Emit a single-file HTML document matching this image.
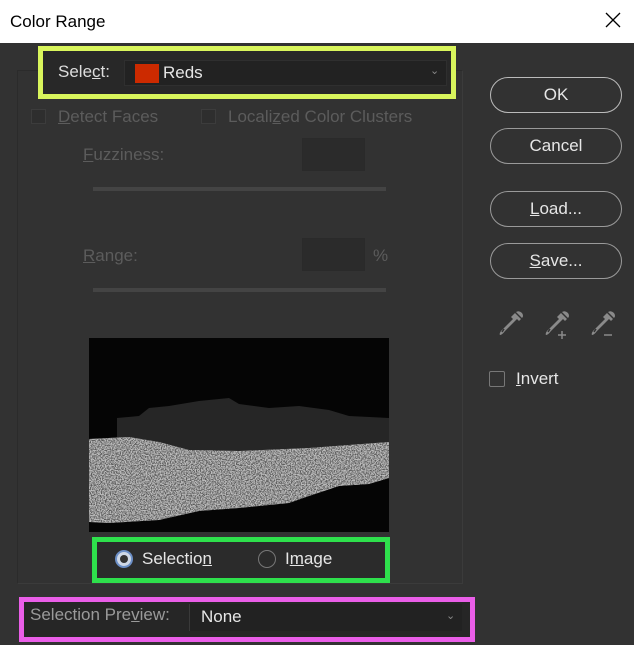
<!DOCTYPE html>
<html><head><meta charset="utf-8"><style>
*{margin:0;padding:0;box-sizing:border-box}
body{width:634px;height:645px;background:#323232;font-family:"Liberation Sans",sans-serif;position:relative;overflow:hidden;color:#ddd}
.a{position:absolute}
.title{left:0;top:0;width:634px;height:43px;background:#fff;color:#000;font-size:17px;padding:12px 0 0 10px}
.dim{color:#5c5c5c;font-size:17px}
.btn{position:absolute;left:490px;width:132px;height:36px;border:1.5px solid #9a9a9a;border-radius:18px;color:#e6e6e6;font-size:17px;text-align:center;line-height:33px}
.cb{position:absolute;width:15px;height:15px;border:1px solid #3c3c3c;background:#2e2e2e}
u{text-decoration:underline}
</style></head><body>
<div class="a title">Color Range
<svg class="a" style="left:605px;top:12px" width="16" height="16" viewBox="0 0 16 16"><path d="M1 1L15 15M15 1L1 15" stroke="#000" stroke-width="1.3"/></svg></div>
<div class="a" style="left:17px;top:70px;width:446px;height:514px;border:1px solid #2b2b2b;border-right-color:#3b3b3b;border-bottom-color:#3b3b3b"></div>
<div class="a" style="left:38px;top:46px;width:418px;height:53px;border:5px solid #d9f55c;background:#282828"></div>
<div class="a" style="left:58px;top:62px;font-size:17px;color:#ddd">Sele<u>c</u>t:</div>
<div class="a" style="left:124px;top:60px;width:323px;height:26px;background:#222;border:1px solid #2f2f2f"></div>
<div class="a" style="left:135px;top:64px;width:24px;height:19px;background:#cc2a00"></div>
<div class="a" style="left:163px;top:63px;font-size:17px;color:#e6e6e6">Reds</div>
<div class="a" style="left:430px;top:64px;font-size:11px;color:#888">⌄</div>
<div class="cb" style="left:31px;top:109px"></div>
<div class="a dim" style="left:58px;top:107px"><u>D</u>etect Faces</div>
<div class="cb" style="left:201px;top:109px"></div>
<div class="a dim" style="left:228px;top:107px">Locali<u>z</u>ed Color Clusters</div>
<div class="a dim" style="left:83px;top:145px"><u>F</u>uzziness:</div>
<div class="a" style="left:302px;top:138px;width:63px;height:33px;background:#2b2b2b;border:1px solid #2a2a2a"></div>
<div class="a" style="left:93px;top:187px;width:293px;height:4px;background:#444"></div>
<div class="a dim" style="left:83px;top:246px"><u>R</u>ange:</div>
<div class="a" style="left:302px;top:238px;width:63px;height:33px;background:#2b2b2b;border:1px solid #2a2a2a"></div>
<div class="a dim" style="left:373px;top:246px">%</div>
<div class="a" style="left:93px;top:288px;width:293px;height:4px;background:#444"></div>
<svg class="a" style="left:89px;top:338px" width="300" height="194" viewBox="0 0 300 194">
<defs><filter id="n"><feTurbulence type="fractalNoise" baseFrequency="0.8" numOctaves="2" seed="3"/><feColorMatrix values="0 0 0 0 0.1  0 0 0 0 0.1  0 0 0 0 0.1  0 0 0 4 -1.6"/><feComposite in2="SourceGraphic" operator="in"/></filter></defs>
<rect width="300" height="194" fill="#050505"/>
<path d="M28 110 L28 80 L50 78 L60 70 L80 68 L110 63 L140 60 L150 66 L180 70 L210 68 L240 72 L260 78 L300 80 L300 112 L200 118 L90 118Z" fill="#262626"/>
<path d="M0 101 L40 99 L70 104 L100 112 L150 113 L220 110 L300 104 L300 140 L280 146 L250 148 L220 158 L200 165 L150 170 L110 173 L70 182 L20 185 L0 184Z" fill="#bdbdbd"/>
<path d="M0 101 L40 99 L70 104 L100 112 L150 113 L220 110 L300 104 L300 140 L280 146 L250 148 L220 158 L200 165 L150 170 L110 173 L70 182 L20 185 L0 184Z" fill="#fff" filter="url(#n)"/>
</svg>
<div class="a" style="left:92px;top:537px;width:298px;height:46px;border:5px solid #2ee04c;background:#2b2b2b"></div>
<div class="a" style="left:115px;top:550px;width:18px;height:18px;border-radius:50%;background:#cfd8e6;border:2px solid #6c8fc7"><div class="a" style="left:3px;top:3px;width:8px;height:8px;border-radius:50%;background:#333"></div></div>
<div class="a" style="left:142px;top:549px;font-size:17px;color:#e6e6e6">Selectio<u>n</u></div>
<div class="a" style="left:258px;top:550px;width:18px;height:18px;border-radius:50%;border:1px solid #777"></div>
<div class="a" style="left:285px;top:549px;font-size:17px;color:#e6e6e6">I<u>m</u>age</div>
<div class="a" style="left:19px;top:597px;width:456px;height:45px;border:5px solid #ea5ee8;background:#262626"></div>
<div class="a" style="left:30px;top:605px;font-size:17px;color:#9a9a9a">Selection Pre<u>v</u>iew:</div>
<div class="a" style="left:189px;top:604px;width:273px;height:27px;background:#222;border-left:1px solid #3a3a3a"></div>
<div class="a" style="left:201px;top:607px;font-size:17px;color:#e6e6e6">None</div>
<div class="a" style="left:446px;top:609px;font-size:11px;color:#888">⌄</div>
<div class="btn" style="top:77px;border-color:#bbb">OK</div>
<div class="btn" style="top:128px">Cancel</div>
<div class="btn" style="top:191px"><u>L</u>oad...</div>
<div class="btn" style="top:243px"><u>S</u>ave...</div>
<svg class="a" style="left:496px;top:310px" width="130" height="30" viewBox="0 0 130 30">
<g id="d"><path d="M19 3 L25 9 L23 11 L21 9 L9 21 Q6 25 4 25 Q3 24 5 21 L17 9 L15 7Z" fill="#8a8a8a"/><path d="M20 2 Q23 0 26 3 Q28 6 26 8 Z" fill="#8a8a8a"/><path d="M8 19 L6 22" stroke="#323232" stroke-width="1.5"/></g>
<use href="#d" x="46"/><path d="M62 25 h8 M66 21 v8" stroke="#8a8a8a" stroke-width="1.5"/>
<use href="#d" x="92"/><path d="M108 25 h8" stroke="#8a8a8a" stroke-width="1.5"/>
</svg>
<div class="a" style="left:489px;top:371px;width:16px;height:16px;border:1px solid #777;border-radius:2px"></div>
<div class="a" style="left:516px;top:369px;font-size:17px;color:#e6e6e6"><u>I</u>nvert</div>
</body></html>
